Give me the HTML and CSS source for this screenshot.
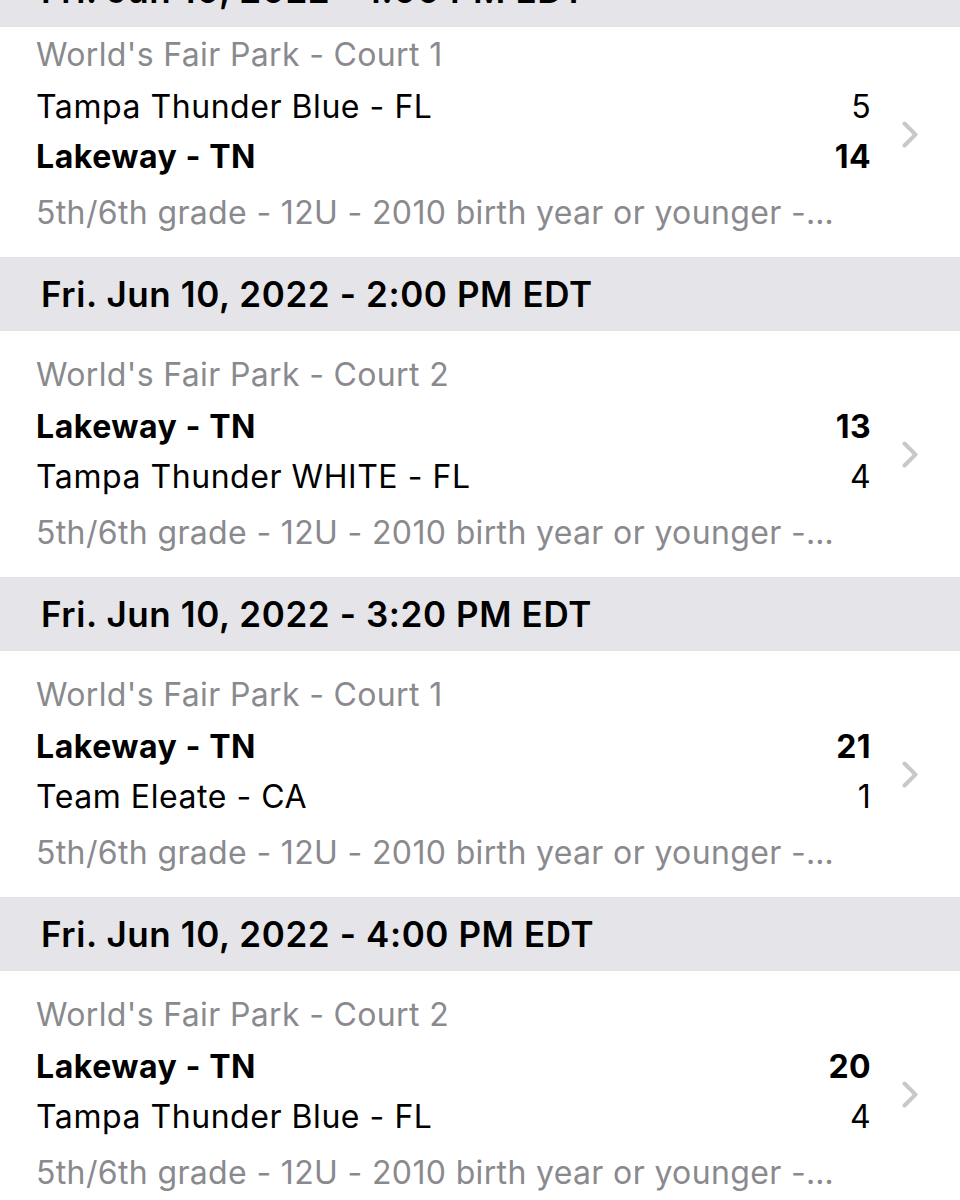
FILE: index.html
```html
<!DOCTYPE html>
<html lang="en">
<head>
<meta charset="utf-8">
<title>Schedule</title>
<link rel="stylesheet" href="styles.css">
</head>
<body>
<div class="list">
  <div class="section-header first"><span>Fri. Jun 10, 2022 - 1:00 PM EDT</span></div>
  <div class="game first">
    <div class="game-main">
      <div class="venue">World's Fair Park - Court 1</div>
      <div class="team"><span>Tampa Thunder Blue - FL</span><span>5</span></div>
      <div class="team win"><span>Lakeway - TN</span><span>14</span></div>
      <div class="division">5th/6th grade - 12U - 2010 birth year or younger -…</div>
    </div>
    <svg class="chevron" viewBox="0 0 16 27" width="16" height="27"><path d="M2.5 2.5 L13.5 13.5 L2.5 24.5" fill="none" stroke="#c7c7cc" stroke-width="4" stroke-linecap="round" stroke-linejoin="round"/></svg>
  </div>

  <div class="section-header"><span>Fri. Jun 10, 2022 - 2:00 PM EDT</span></div>
  <div class="game">
    <div class="game-main">
      <div class="venue">World's Fair Park - Court 2</div>
      <div class="team win"><span>Lakeway - TN</span><span>13</span></div>
      <div class="team"><span>Tampa Thunder WHITE - FL</span><span>4</span></div>
      <div class="division">5th/6th grade - 12U - 2010 birth year or younger -…</div>
    </div>
    <svg class="chevron" viewBox="0 0 16 27" width="16" height="27"><path d="M2.5 2.5 L13.5 13.5 L2.5 24.5" fill="none" stroke="#c7c7cc" stroke-width="4" stroke-linecap="round" stroke-linejoin="round"/></svg>
  </div>

  <div class="section-header"><span>Fri. Jun 10, 2022 - 3:20 PM EDT</span></div>
  <div class="game">
    <div class="game-main">
      <div class="venue">World's Fair Park - Court 1</div>
      <div class="team win"><span>Lakeway - TN</span><span>21</span></div>
      <div class="team"><span>Team Eleate - CA</span><span>1</span></div>
      <div class="division">5th/6th grade - 12U - 2010 birth year or younger -…</div>
    </div>
    <svg class="chevron" viewBox="0 0 16 27" width="16" height="27"><path d="M2.5 2.5 L13.5 13.5 L2.5 24.5" fill="none" stroke="#c7c7cc" stroke-width="4" stroke-linecap="round" stroke-linejoin="round"/></svg>
  </div>

  <div class="section-header"><span>Fri. Jun 10, 2022 - 4:00 PM EDT</span></div>
  <div class="game">
    <div class="game-main">
      <div class="venue">World's Fair Park - Court 2</div>
      <div class="team win"><span>Lakeway - TN</span><span>20</span></div>
      <div class="team"><span>Tampa Thunder Blue - FL</span><span>4</span></div>
      <div class="division">5th/6th grade - 12U - 2010 birth year or younger -…</div>
    </div>
    <svg class="chevron" viewBox="0 0 16 27" width="16" height="27"><path d="M2.5 2.5 L13.5 13.5 L2.5 24.5" fill="none" stroke="#c7c7cc" stroke-width="4" stroke-linecap="round" stroke-linejoin="round"/></svg>
  </div>
</div>
</body>
</html>
```
FILE: styles.css
```css
html, body {
  margin: 0;
  padding: 0;
  background: #ffffff;
}
body {
  width: 960px;
  height: 1200px;
  overflow: hidden;
  font-family: Inter, "Liberation Sans", Arial, sans-serif;
  color: #000000;
}
.list {
  display: flex;
  flex-direction: column;
}
.section-header {
  height: 74px;
  background: #e4e4e9;
  display: flex;
  align-items: center;
  padding-left: 41px;
  font-size: 35px;
  font-weight: 600;
  letter-spacing: 0.6px;
  box-sizing: border-box;
}
.section-header.first {
  margin-top: -47px;
}
.game {
  display: flex;
  align-items: center;
  padding: 19px 42px 19px 36px;
  background: #ffffff;
}
.game.first {
  padding-top: 3px;
}
.game-main {
  width: 835px;
  display: flex;
  flex-direction: column;
}
.chevron {
  margin-left: 31px;
  flex: none;
}
.venue, .team, .division {
  height: 50px;
  line-height: 50px;
  font-size: 32px;
  letter-spacing: 0.35px;
  white-space: nowrap;
}
.venue {
  color: #8a8a8e;
}
.team {
  display: flex;
  justify-content: space-between;
}
.team span:first-child {
  letter-spacing: 0.55px;
}
.venue + .team {
  margin-top: 2px;
}
.team.win {
  font-weight: 700;
}
.division {
  margin-top: 6px;
  color: #8a8a8e;
}
```
